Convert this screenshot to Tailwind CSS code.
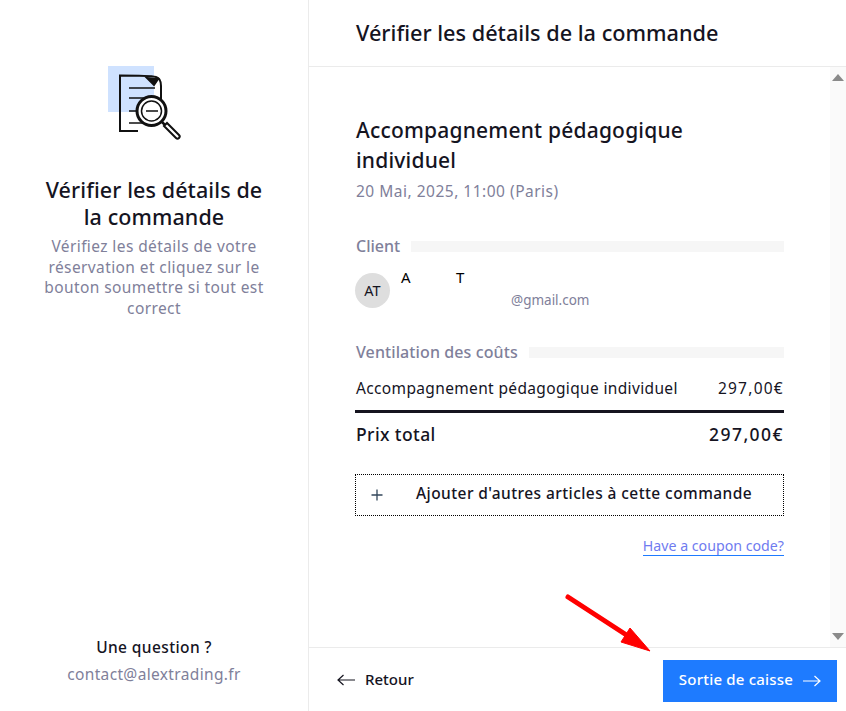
<!DOCTYPE html>
<html lang="fr">
<head>
    <meta charset="UTF-8">
    <title>Vérifier les détails de la commande</title>
    <script src="https://cdn.jsdelivr.net/npm/@tailwindcss/browser@4"></script>
</head>
<body class="bg-white font-['Noto_Sans',sans-serif] text-[#15141f] overflow-hidden">
    <div class="relative flex w-[846px] h-[711px]">

        <!-- Left panel -->
        <aside class="w-[309px] h-full shrink-0 border-r border-[#ebebeb] flex flex-col items-center">
            <div class="relative w-[80px] h-[80px] mt-[66px] ml-[-16px]">
                <div class="absolute left-[2px] top-0 w-[46px] h-[46px] bg-[#cfe2ff]"></div>
                <svg class="absolute left-0 top-0" width="80" height="80" viewBox="0 0 80 80" fill="none" stroke="#111" stroke-width="2">
                    <path d="M32 65H14V9.5C30 9.5 44 9.5 50 11C54 12 55 15 55 20V33"/>
                    <path d="M41 12L52 13L48 19Z" fill="#111"/>
                    <path d="M23 22H49M23 32H42M23 45H32M23 57H38" stroke-width="1.6"/>
                    <circle cx="45.5" cy="45" r="14.5" fill="#fff" stroke-width="3"/>
                    <circle cx="45.5" cy="45" r="10" stroke-width="1.5"/>
                    <path d="M40 45H52" stroke-width="1.5"/>
                    <path d="M56 56L59 59" stroke-width="2.5"/>
                    <path d="M58 60L61 57L73 69C75 71 72 74 70 72Z" fill="#fff" stroke-width="2"/>
                </svg>
            </div>
            <h2 class="mt-[30px] w-[230px] text-center text-[21.5px] leading-[27px] font-medium tracking-[0.1px]">Vérifier les détails de la commande</h2>
            <p class="mt-[6px] w-[250px] text-center text-[15.5px] leading-[20.5px] tracking-[0.4px] text-[#80809a]">Vérifiez les détails de votre réservation et cliquez sur le bouton soumettre si tout est correct</p>
            <div class="mt-auto mb-[27px] text-center">
                <p class="text-[15.5px] leading-[20px] font-medium tracking-[0.4px]">Une question ?</p>
                <p class="mt-[7px] text-[15.5px] leading-[20px] tracking-[0.35px] text-[#80809a]">contact@alextrading.fr</p>
            </div>
        </aside>

        <!-- Right panel -->
        <main class="flex-1 flex flex-col min-w-0">
            <header class="h-[67px] shrink-0 border-b border-[#ebebeb] pl-[47px] pt-[18px]">
                <h1 class="text-[21.7px] leading-[30px] font-medium">Vérifier les détails de la commande</h1>
            </header>

            <div class="flex-1 flex min-h-0">
                <div class="flex-1 pl-[46px] pr-[46px] pt-[48px]">
                    <h3 class="w-[345px] pl-px text-[21px] leading-[30px] font-medium tracking-[0.2px]">Accompagnement pédagogique individuel</h3>
                    <p class="mt-[6px] pl-px text-[15.5px] leading-[20px] tracking-[0.5px] text-[#80809a]">20 Mai, 2025, 11:00 (Paris)</p>

                    <div class="mt-[35px] flex items-center gap-[11px] pl-px">
                        <span class="text-[16px] leading-[20px] font-medium text-[#80809a]">Client</span>
                        <div class="flex-1 h-[11px] bg-[#f6f6f6]"></div>
                    </div>
                    <div class="mt-[11px] flex h-[50px]">
                        <div class="w-[35px] h-[35px] mt-[6px] rounded-full bg-[#dedede] flex items-center justify-center text-[14.5px]">AT</div>
                        <div class="ml-[11px] relative flex-1">
                            <div class="flex text-[15px] leading-[20px] text-black"><span class="w-[55px]">A</span><span>T</span></div>
                            <p class="mt-[3px] ml-[110px] text-[13.5px] leading-[20px] text-[#80809a]">@gmail.com</p>
                        </div>
                    </div>

                    <div class="mt-[25px] flex items-center gap-[11px] pl-px">
                        <span class="text-[16px] leading-[20px] font-medium tracking-[0.1px] text-[#80809a]">Ventilation des coûts</span>
                        <div class="flex-1 h-[11px] bg-[#f6f6f6]"></div>
                    </div>
                    <div class="mt-[16px] flex justify-between pl-px text-[15.5px] leading-[20px] tracking-[0.35px]">
                        <span>Accompagnement pédagogique individuel</span>
                        <span class="tracking-[1.25px]">297,00€</span>
                    </div>
                    <div class="mt-[12px] border-t-[3px] border-[#15141f] pt-[9px] flex justify-between pl-px text-[17.5px] leading-[24px] font-medium tracking-[0.4px]">
                        <span>Prix total</span>
                        <span class="tracking-[1.45px]">297,00€</span>
                    </div>

                    <div class="mt-[28px] h-[42px] border border-dotted border-black flex items-center pl-[14px]">
                        <svg width="14" height="14" viewBox="0 0 14 14" fill="none" stroke="#33475b" stroke-width="1.3"><path d="M7 1.5V12.5M1.5 7H12.5"/></svg>
                        <span class="ml-[32px] pb-[2px] text-[15.5px] font-medium tracking-[0.42px]">Ajouter d'autres articles à cette commande</span>
                    </div>

                    <div class="mt-[21px] flex justify-end">
                        <a class="text-[14.2px] leading-[18px] text-[#6f7bf0] border-b border-[#1e7bff]">Have a coupon code?</a>
                    </div>
                </div>

                <!-- Scrollbar -->
                <div class="w-[16px] shrink-0 bg-[#fafafa] flex flex-col items-center justify-between py-[7px]">
                    <div class="w-0 h-0 border-x-[6px] border-x-transparent border-b-[7px] border-b-[#8a8a8a]"></div>
                    <div class="w-0 h-0 border-x-[6px] border-x-transparent border-t-[7px] border-t-[#8a8a8a]"></div>
                </div>
            </div>

            <footer class="h-[64px] shrink-0 border-t border-[#ebebeb] flex items-center justify-between pl-[28px] pr-[9px]">
                <div class="flex items-center gap-[10px]">
                    <svg width="18" height="12" viewBox="0 0 18 12" fill="none" stroke="#15141f" stroke-width="1.2"><path d="M18 6H1M6.5 1L1 6L6.5 11"/></svg>
                    <span class="text-[15px] font-medium">Retour</span>
                </div>
                <button class="w-[174px] h-[42px] pb-[3px] bg-[#1e7bff] text-white flex items-center justify-center gap-[10px] mt-[3px]">
                    <span class="text-[15px] font-medium tracking-[0.2px]">Sortie de caisse</span>
                    <svg class="mt-[2px]" width="18" height="12" viewBox="0 0 18 12" fill="none" stroke="#fff" stroke-width="1.2"><path d="M0 6H17M11.5 1L17 6L11.5 11"/></svg>
                </button>
            </footer>
        </main>

        <!-- Red annotation arrow -->
        <svg class="absolute left-0 top-0 pointer-events-none" width="846" height="711" viewBox="0 0 846 711" fill="none">
            <path d="M568 597L628 636" stroke="#f00" stroke-width="5" stroke-linecap="round"/>
            <path d="M650 651L621 642L630 628Z" fill="#f00" stroke="#f00" stroke-width="1"/>
        </svg>
    </div>
</body>
</html>
